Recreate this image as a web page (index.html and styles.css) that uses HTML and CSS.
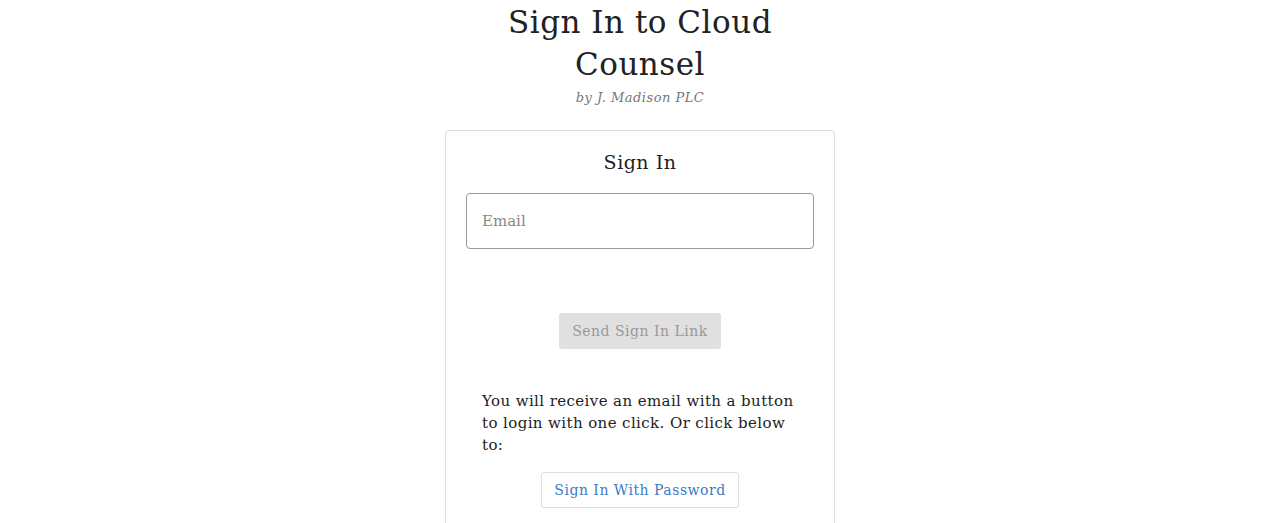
FILE: index.html
```html
<!DOCTYPE html>
<html lang="en">
<head>
    <meta charset="UTF-8">
    <meta name="viewport" content="width=device-width, initial-scale=1.0">
    <title>Sign In to Cloud Counsel</title>
    <link rel="stylesheet" href="styles.css">
</head>
<body>
    <div class="page">
        <div class="header">
            <h1 class="title">Sign In to Cloud Counsel</h1>
            <div class="byline">by J. Madison PLC</div>
        </div>
        <div class="card">
            <h2 class="cardTitle">Sign In</h2>
            <input class="emailInput" type="email" placeholder="Email">
            <div class="row">
                <button class="sendButton" disabled>Send Sign In Link</button>
            </div>
            <p class="note">You will receive an email with a button to login with one click. Or click below to:</p>
            <div class="row">
                <button class="passwordButton">Sign In With Password</button>
            </div>
        </div>
    </div>
</body>
</html>
```

FILE: styles.css
```css
body {
    margin: 0;
    background: #fff;
    font-family: "DejaVu Serif", "Liberation Serif", serif;
    color: #222;
}

.page {
    display: flex;
    flex-direction: column;
    align-items: center;
}

.header {
    width: 388px;
    text-align: center;
}

.title {
    margin: 0;
    padding-top: 1px;
    font-size: 31px;
    font-weight: normal;
    line-height: 42px;
    letter-spacing: 0.5px;
    color: #222;
}

.byline {
    margin-top: 4px;
    font-size: 13px;
    font-style: italic;
    letter-spacing: 0.5px;
    color: #777;
    line-height: 18px;
}

.card {
    margin-top: 23px;
    width: 348px;
    padding: 18px 20px 20px;
    border: 1px solid #ddd;
    border-radius: 4px;
    min-height: 400px;
}

.cardTitle {
    margin: 0;
    text-align: center;
    font-size: 19px;
    font-weight: normal;
    letter-spacing: 0.5px;
    line-height: 26px;
    color: #222;
}

.emailInput {
    display: block;
    box-sizing: border-box;
    margin-top: 18px;
    width: 348px;
    height: 56px;
    padding: 0 15px;
    border: 1px solid #999;
    border-radius: 4px;
    font-family: inherit;
    font-size: 15px;
    color: #222;
}

.emailInput::placeholder {
    color: #888;
}

.row {
    display: flex;
    justify-content: center;
}

.sendButton {
    margin-top: 64px;
    height: 36px;
    padding: 0 13px;
    border: none;
    border-radius: 3px;
    background: #e0e0e0;
    color: #999;
    font-family: inherit;
    font-size: 14px;
    letter-spacing: 0.5px;
}

.note {
    margin: 41px 16px 0;
    font-size: 15px;
    line-height: 22px;
    letter-spacing: 0.4px;
    color: #222;
}

.passwordButton {
    margin-top: 16px;
    height: 36px;
    padding: 0 12px;
    border: 1px solid #ddd;
    border-radius: 3px;
    background: #fff;
    color: #3a7bc8;
    font-family: inherit;
    font-size: 14px;
    letter-spacing: 0.5px;
}
```
